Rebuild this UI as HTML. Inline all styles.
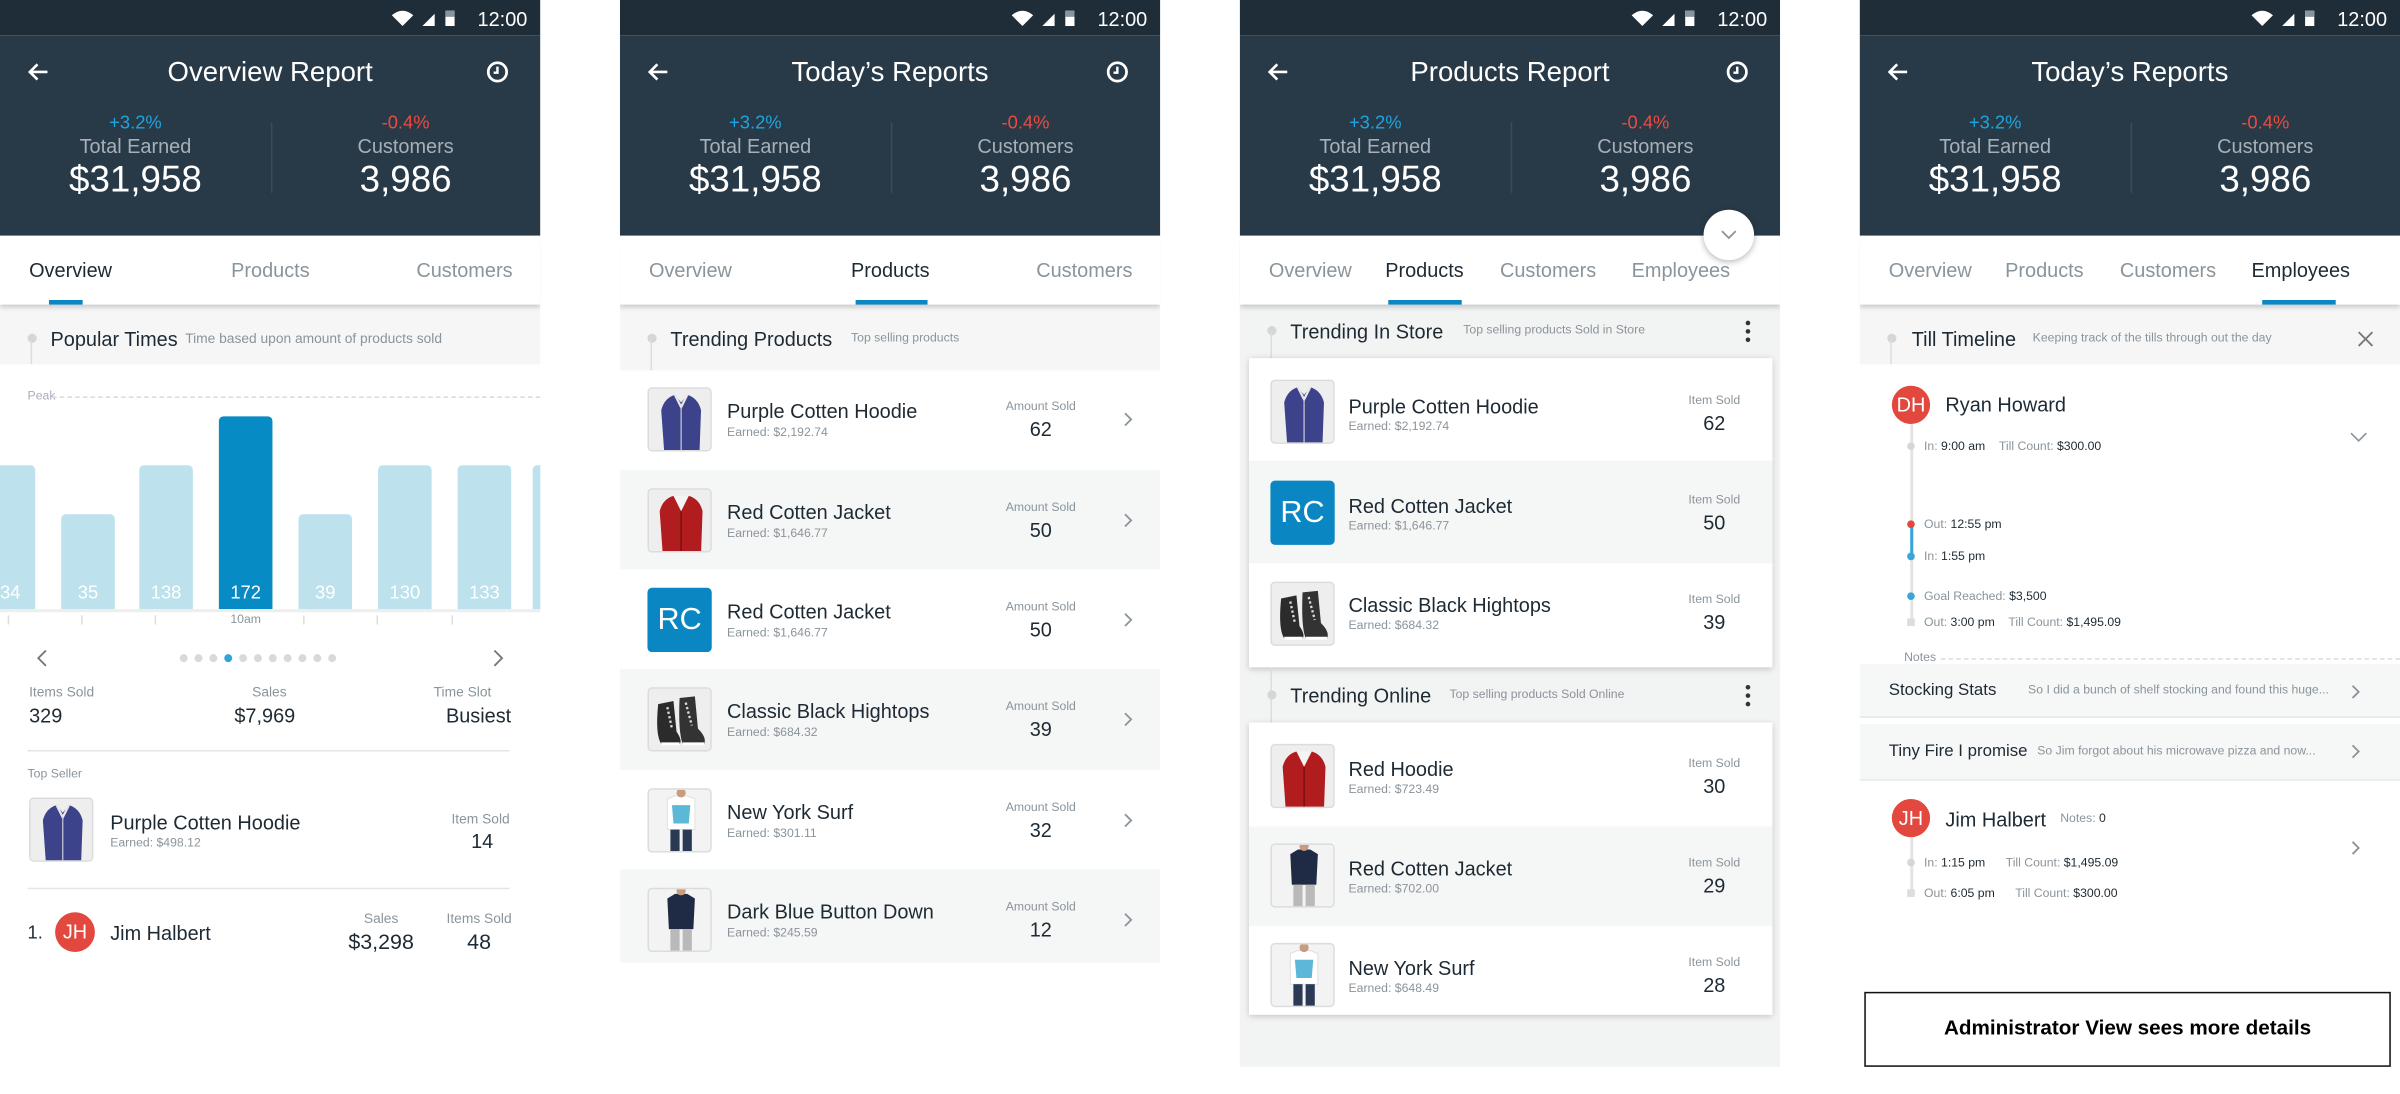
<!DOCTYPE html>
<html><head><meta charset="utf-8"><style>
*{margin:0;padding:0;box-sizing:border-box}
html,body{width:2400px;height:1094px;overflow:hidden;background:#fff}
body{font-family:"Liberation Sans",sans-serif;color:#1e2a33}
#w{position:absolute;left:0;top:0;width:1568px;height:715px;transform:scale(1.530612);transform-origin:0 0}
.s{position:absolute;top:0;width:353px;height:715px;overflow:hidden;background:#fff}
.a{position:absolute}
.t{position:absolute;white-space:nowrap;line-height:1}
.sb{position:absolute;left:0;top:0;width:353px;height:23px;background:#1f2d38}
.hd{position:absolute;left:0;top:23px;width:353px;height:131px;background:#283a48}
.tabs{position:absolute;left:0;top:154px;width:353px;height:45px;background:#fff;box-shadow:0 2px 3px rgba(0,0,0,.18);z-index:2}
.ul{position:absolute;top:42px;height:3px;background:#0a86c2}
.sec{position:absolute;left:0;width:353px;background:#f6f6f6}
.dot{position:absolute;width:6px;height:6px;border-radius:3px;background:#d6d6d6}
.g{color:#8a949b}
.th{position:absolute;width:42px;height:42px;border:1px solid #dcdcdc;border-radius:3px;background:#f1f1f1;overflow:hidden}
.rc{position:absolute;width:42px;height:42px;border-radius:3px;background:#0a87c3;color:#fff;font-size:20px;line-height:42px;text-align:center}
.av{position:absolute;border-radius:50%;background:#e2483d;color:#fff;text-align:center}
.card{position:absolute;left:6px;width:342px;background:#fff;box-shadow:0 1px 4px rgba(0,0,0,.2)}
</style></head><body><div id="w">

<svg width="0" height="0" style="position:absolute">
<defs>
<g id="hood"><rect width="42" height="42" fill="#eeeeee"/><path d="M10 42 L8 14 Q10 6 17 4 L21 9 L25 4 Q32 6 34 14 L33 42 Z" fill="#3c438a"/><path d="M17 4 L21 12 L25 4" fill="none" stroke="#e8e8e8" stroke-width="1.5"/><line x1="21" y1="12" x2="21" y2="42" stroke="#c9c9d8" stroke-width=".8"/></g>
<g id="jack"><rect width="42" height="42" fill="#eeeeee"/><path d="M9 42 L7 14 Q9 6 16 4 L21 10 L26 4 Q33 6 35 14 L34 42 Z" fill="#b11d1e"/><path d="M16 4 L21 14 L26 4 Z" fill="#f4f4f4"/><line x1="21" y1="14" x2="21" y2="42" stroke="#7a1010" stroke-width="1"/></g>
<g id="shoe"><rect width="42" height="42" fill="#eeeeee"/><path d="M6 10 L16 8 L18 28 Q22 34 20 36 L8 36 Q4 30 6 10Z" fill="#2b2b2b"/><path d="M20 6 L30 5 L32 26 Q38 32 36 36 L22 36 Q19 28 20 6Z" fill="#333"/><path d="M8 36 L20 36 M22 36 L36 36" stroke="#fff" stroke-width="2"/><path d="M12 12 L15 26 M24 9 L28 24" stroke="#ddd" stroke-width="1.5" stroke-dasharray="1.5 1.5"/></g>
<g id="tee"><rect width="42" height="42" fill="#f3f3f3"/><path d="M12 6 L17 4 L25 4 L30 6 L30 26 L12 26Z" fill="#fff" stroke="#ddd" stroke-width=".6"/><path d="M15 10 L27 10 L26 22 L16 22Z" fill="#5bb8d6"/><rect x="14" y="26" width="6" height="15" fill="#2a3a55"/><rect x="22" y="26" width="6" height="15" fill="#2a3a55"/><circle cx="21" cy="2" r="3" fill="#c99b7f"/></g>
<g id="navy"><rect width="42" height="42" fill="#f3f3f3"/><path d="M12 6 L17 3 L25 3 L30 6 L29 26 L13 26Z" fill="#1f2a44"/><rect x="14" y="26" width="6" height="15" fill="#b9b9b9"/><rect x="22" y="26" width="6" height="15" fill="#b9b9b9"/><circle cx="21" cy="1" r="3" fill="#c99b7f"/></g>
<g id="stat"><path d="M0 5 Q7 -1 14 5 L7 12 Z" fill="#fff"/><path d="M20 12 L28 4 L28 12Z" fill="#fff"/><rect x="35" y="2" width="6" height="10" fill="#fff"/><rect x="35" y="2" width="6" height="4" fill="#8893a0"/></g>
<g id="clk"><circle cx="7" cy="7" r="6" fill="none" stroke="#fff" stroke-width="1.8"/><path d="M7 3.5 V7.5 H4.5" fill="none" stroke="#fff" stroke-width="1.6"/></g>
<g id="back"><path d="M13 6 H1.5 M6.5 1 L1.5 6 L6.5 11" fill="none" stroke="#fff" stroke-width="1.7"/></g>
<g id="chev"><path d="M1 1 L5 5 L1 9" fill="none" stroke="#8a949b" stroke-width="1.2"/></g>
</defs></svg>

<!-- ================= SCREEN 1 ================= -->
<div class="s" style="left:0">
<div class="sb"></div>
<svg class="a" style="left:256px;top:5px" width="42" height="13"><use href="#stat"/></svg>
<div class="t" style="left:312px;top:6px;font-size:13px;color:#fff">12:00</div>
<div class="hd"></div>
<svg class="a" style="left:18px;top:41px" width="14" height="12"><use href="#back"/></svg>
<div class="t" style="left:0;width:353px;text-align:center;top:38px;font-size:18px;color:#fff">Overview Report</div>
<svg class="a" style="left:318px;top:40px" width="14" height="14"><use href="#clk"/></svg>
<div class="t" style="left:0;width:177px;text-align:center;top:74px;font-size:12px;color:#1ea4dd">+3.2%</div>
<div class="t" style="left:0;width:177px;text-align:center;top:89px;font-size:13px;color:#a7b0b8">Total Earned</div>
<div class="t" style="left:0;width:177px;text-align:center;top:106px;font-size:24px;color:#fff">$31,958</div>
<div class="a" style="left:177px;top:80px;width:1px;height:46px;background:#3a4c5a"></div>
<div class="t" style="left:177px;width:176px;text-align:center;top:74px;font-size:12px;color:#ee4a3f">-0.4%</div>
<div class="t" style="left:177px;width:176px;text-align:center;top:89px;font-size:13px;color:#a7b0b8">Customers</div>
<div class="t" style="left:177px;width:176px;text-align:center;top:106px;font-size:24px;color:#fff">3,986</div>
<div class="tabs">
 <div class="t" style="left:19px;top:16px;font-size:13px">Overview</div>
 <div class="t" style="left:151px;top:16px;font-size:13px;color:#8a949b">Products</div>
 <div class="t" style="left:272px;top:16px;font-size:13px;color:#8a949b">Customers</div>
 <div class="ul" style="left:32px;width:22px"></div>
</div>
<div class="sec" style="top:199px;height:39px"></div>
<div class="dot" style="left:18px;top:218px"></div><div class="a" style="left:20px;top:222px;width:1px;height:16px;background:#ddd"></div>
<div class="t" style="left:33px;top:215px;font-size:13px">Popular Times</div>
<div class="t g" style="left:121px;top:217px;font-size:9px">Time based upon amount of products sold</div>
<div class="t g" style="left:18px;top:255px;font-size:8px;color:#aab">Peak</div>
<div class="a" style="left:34px;top:259px;width:319px;border-top:1px dashed #dcdcdc"></div>
<div class="a" style="left:-10px;top:304px;width:33px;height:94px;background:#bde2ee;border-radius:3px 3px 0 0"></div>
<div class="a" style="left:40px;top:336px;width:35px;height:62px;background:#bde2ee;border-radius:3px 3px 0 0"></div>
<div class="a" style="left:91px;top:304px;width:35px;height:94px;background:#bde2ee;border-radius:3px 3px 0 0"></div>
<div class="a" style="left:143px;top:272px;width:35px;height:126px;background:#078bc4;border-radius:3px 3px 0 0"></div>
<div class="a" style="left:195px;top:336px;width:35px;height:62px;background:#bde2ee;border-radius:3px 3px 0 0"></div>
<div class="a" style="left:247px;top:304px;width:35px;height:94px;background:#bde2ee;border-radius:3px 3px 0 0"></div>
<div class="a" style="left:299px;top:304px;width:35px;height:94px;background:#bde2ee;border-radius:3px 3px 0 0"></div>
<div class="a" style="left:348px;top:304px;width:10px;height:94px;background:#bde2ee;border-radius:3px 3px 0 0"></div>
<div class="a" style="left:0;top:398px;width:353px;height:2px;background:#eee"></div>
<div class="t" style="left:0;top:381px;font-size:12px;color:#fff">34</div>
<div class="t" style="left:40px;width:35px;text-align:center;top:381px;font-size:12px;color:#fff">35</div>
<div class="t" style="left:91px;width:35px;text-align:center;top:381px;font-size:12px;color:#fff">138</div>
<div class="t" style="left:143px;width:35px;text-align:center;top:381px;font-size:12px;color:#fff">172</div>
<div class="t" style="left:195px;width:35px;text-align:center;top:381px;font-size:12px;color:#fff">39</div>
<div class="t" style="left:247px;width:35px;text-align:center;top:381px;font-size:12px;color:#fff">130</div>
<div class="t" style="left:299px;width:35px;text-align:center;top:381px;font-size:12px;color:#fff">133</div>
<div class="t g" style="left:143px;width:35px;text-align:center;top:401px;font-size:8px">10am</div>
<div class="a" style="left:5px;top:402px;width:1px;height:6px;background:#ddd"></div>
<div class="a" style="left:53px;top:402px;width:1px;height:6px;background:#ddd"></div>
<div class="a" style="left:101px;top:402px;width:1px;height:6px;background:#ddd"></div>
<div class="a" style="left:198px;top:402px;width:1px;height:6px;background:#ddd"></div>
<div class="a" style="left:246px;top:402px;width:1px;height:6px;background:#ddd"></div>
<div class="a" style="left:295px;top:402px;width:1px;height:6px;background:#ddd"></div>
<svg class="a" style="left:24px;top:424px" width="7" height="12"><path d="M6 1 L1 6 L6 11" fill="none" stroke="#777" stroke-width="1.2"/></svg>
<svg class="a" style="left:322px;top:424px" width="7" height="12"><path d="M1 1 L6 6 L1 11" fill="none" stroke="#777" stroke-width="1.2"/></svg>
<svg class="a" style="left:116px;top:426px" width="115" height="8">
<g fill="#d9d9d9"><circle cx="4" cy="4" r="2.6"/><circle cx="13.7" cy="4" r="2.6"/><circle cx="23.4" cy="4" r="2.6"/><circle cx="42.8" cy="4" r="2.6"/><circle cx="52.5" cy="4" r="2.6"/><circle cx="62.2" cy="4" r="2.6"/><circle cx="71.9" cy="4" r="2.6"/><circle cx="81.6" cy="4" r="2.6"/><circle cx="91.3" cy="4" r="2.6"/><circle cx="101" cy="4" r="2.6"/></g><circle cx="33.1" cy="4" r="2.6" fill="#2da5d8"/></svg>
<div class="t g" style="left:19px;top:448px;font-size:9px">Items Sold</div>
<div class="t" style="left:19px;top:461px;font-size:13px">329</div>
<div class="t g" style="left:126px;width:100px;text-align:center;top:448px;font-size:9px">Sales</div>
<div class="t" style="left:126px;width:94px;text-align:center;top:461px;font-size:13px">$7,969</div>
<div class="t g" style="left:233px;width:100px;text-align:right;top:448px;font-size:9px;padding-right:12px">Time Slot</div>
<div class="t" style="left:233px;width:101px;text-align:right;top:461px;font-size:13px">Busiest</div>
<div class="a" style="left:18px;top:490px;width:315px;height:1px;background:#e5e5e5"></div>
<div class="t g" style="left:18px;top:502px;font-size:8px">Top Seller</div>
<div class="th" style="left:19px;top:521px"><svg width="42" height="42"><use href="#hood"/></svg></div>
<div class="t" style="left:72px;top:531px;font-size:13px">Purple Cotten Hoodie</div>
<div class="t g" style="left:72px;top:547px;font-size:8px">Earned: $498.12</div>
<div class="t g" style="left:260px;width:73px;text-align:right;top:531px;font-size:9px">Item Sold</div>
<div class="t" style="left:290px;width:50px;text-align:center;top:543px;font-size:13px">14</div>
<div class="a" style="left:18px;top:580px;width:315px;height:1px;background:#e5e5e5"></div>
<div class="t" style="left:18px;top:603px;font-size:12px">1.</div>
<div class="av" style="left:36px;top:596px;width:26px;height:26px;line-height:26px;font-size:13px">JH</div>
<div class="t" style="left:72px;top:603px;font-size:13px">Jim Halbert</div>
<div class="t g" style="left:219px;width:60px;text-align:center;top:596px;font-size:9px">Sales</div>
<div class="t" style="left:219px;width:60px;text-align:center;top:608px;font-size:14px">$3,298</div>
<div class="t g" style="left:288px;width:50px;text-align:center;top:596px;font-size:9px">Items Sold</div>
<div class="t" style="left:288px;width:50px;text-align:center;top:608px;font-size:14px">48</div>
</div>

<!-- ================= SCREEN 2 ================= -->
<div class="s" style="left:405px;height:629px">
<div class="sb"></div>
<svg class="a" style="left:256px;top:5px" width="42" height="13"><use href="#stat"/></svg>
<div class="t" style="left:312px;top:6px;font-size:13px;color:#fff">12:00</div>
<div class="hd"></div>
<svg class="a" style="left:18px;top:41px" width="14" height="12"><use href="#back"/></svg>
<div class="t" style="left:0;width:353px;text-align:center;top:38px;font-size:18px;color:#fff">Today’s Reports</div>
<svg class="a" style="left:318px;top:40px" width="14" height="14"><use href="#clk"/></svg>
<div class="t" style="left:0;width:177px;text-align:center;top:74px;font-size:12px;color:#1ea4dd">+3.2%</div>
<div class="t" style="left:0;width:177px;text-align:center;top:89px;font-size:13px;color:#a7b0b8">Total Earned</div>
<div class="t" style="left:0;width:177px;text-align:center;top:106px;font-size:24px;color:#fff">$31,958</div>
<div class="a" style="left:177px;top:80px;width:1px;height:46px;background:#3a4c5a"></div>
<div class="t" style="left:177px;width:176px;text-align:center;top:74px;font-size:12px;color:#ee4a3f">-0.4%</div>
<div class="t" style="left:177px;width:176px;text-align:center;top:89px;font-size:13px;color:#a7b0b8">Customers</div>
<div class="t" style="left:177px;width:176px;text-align:center;top:106px;font-size:24px;color:#fff">3,986</div>
<div class="tabs">
 <div class="t" style="left:19px;top:16px;font-size:13px;color:#8a949b">Overview</div>
 <div class="t" style="left:151px;top:16px;font-size:13px">Products</div>
 <div class="t" style="left:272px;top:16px;font-size:13px;color:#8a949b">Customers</div>
 <div class="ul" style="left:154px;width:47px"></div>
</div>
<div class="sec" style="top:199px;height:43px"></div>
<div class="dot" style="left:18px;top:218px"></div><div class="a" style="left:20px;top:222px;width:1px;height:20px;background:#ddd"></div>
<div class="t" style="left:33px;top:215px;font-size:13px">Trending Products</div>
<div class="t g" style="left:151px;top:217px;font-size:8px">Top selling products</div>
<div class="a" style="left:0;top:307px;width:353px;height:65px;background:#f5f6f6"></div>
<div class="a" style="left:0;top:437px;width:353px;height:66px;background:#f5f6f6"></div>
<div class="a" style="left:0;top:568px;width:353px;height:61px;background:#f5f6f6"></div>

<div class="th" style="left:18px;top:253px"><svg width="42" height="42"><use href="#hood"/></svg></div>
<div class="t" style="left:70px;top:262px;font-size:13px">Purple Cotten Hoodie</div>
<div class="t g" style="left:70px;top:279px;font-size:8px">Earned: $2,192.74</div>
<div class="t g" style="left:245px;width:60px;text-align:center;top:262px;font-size:8px">Amount Sold</div>
<div class="t" style="left:245px;width:60px;text-align:center;top:274px;font-size:13px">62</div>
<svg class="a" style="left:329px;top:269px" width="7" height="11"><use href="#chev"/></svg>

<div class="th" style="left:18px;top:319px"><svg width="42" height="42"><use href="#jack"/></svg></div>
<div class="t" style="left:70px;top:328px;font-size:13px">Red Cotten Jacket</div>
<div class="t g" style="left:70px;top:345px;font-size:8px">Earned: $1,646.77</div>
<div class="t g" style="left:245px;width:60px;text-align:center;top:328px;font-size:8px">Amount Sold</div>
<div class="t" style="left:245px;width:60px;text-align:center;top:340px;font-size:13px">50</div>
<svg class="a" style="left:329px;top:335px" width="7" height="11"><use href="#chev"/></svg>

<div class="rc" style="left:18px;top:384px">RC</div>
<div class="t" style="left:70px;top:393px;font-size:13px">Red Cotten Jacket</div>
<div class="t g" style="left:70px;top:410px;font-size:8px">Earned: $1,646.77</div>
<div class="t g" style="left:245px;width:60px;text-align:center;top:393px;font-size:8px">Amount Sold</div>
<div class="t" style="left:245px;width:60px;text-align:center;top:405px;font-size:13px">50</div>
<svg class="a" style="left:329px;top:400px" width="7" height="11"><use href="#chev"/></svg>

<div class="th" style="left:18px;top:449px"><svg width="42" height="42"><use href="#shoe"/></svg></div>
<div class="t" style="left:70px;top:458px;font-size:13px">Classic Black Hightops</div>
<div class="t g" style="left:70px;top:475px;font-size:8px">Earned: $684.32</div>
<div class="t g" style="left:245px;width:60px;text-align:center;top:458px;font-size:8px">Amount Sold</div>
<div class="t" style="left:245px;width:60px;text-align:center;top:470px;font-size:13px">39</div>
<svg class="a" style="left:329px;top:465px" width="7" height="11"><use href="#chev"/></svg>

<div class="th" style="left:18px;top:515px"><svg width="42" height="42"><use href="#tee"/></svg></div>
<div class="t" style="left:70px;top:524px;font-size:13px">New York Surf</div>
<div class="t g" style="left:70px;top:541px;font-size:8px">Earned: $301.11</div>
<div class="t g" style="left:245px;width:60px;text-align:center;top:524px;font-size:8px">Amount Sold</div>
<div class="t" style="left:245px;width:60px;text-align:center;top:536px;font-size:13px">32</div>
<svg class="a" style="left:329px;top:531px" width="7" height="11"><use href="#chev"/></svg>

<div class="th" style="left:18px;top:580px"><svg width="42" height="42"><use href="#navy"/></svg></div>
<div class="t" style="left:70px;top:589px;font-size:13px">Dark Blue Button Down</div>
<div class="t g" style="left:70px;top:606px;font-size:8px">Earned: $245.59</div>
<div class="t g" style="left:245px;width:60px;text-align:center;top:589px;font-size:8px">Amount Sold</div>
<div class="t" style="left:245px;width:60px;text-align:center;top:601px;font-size:13px">12</div>
<svg class="a" style="left:329px;top:596px" width="7" height="11"><use href="#chev"/></svg>
</div>

<!-- ================= SCREEN 3 ================= -->
<div class="s" style="left:810px;height:697px;background:#f2f3f3">
<div class="sb"></div>
<svg class="a" style="left:256px;top:5px" width="42" height="13"><use href="#stat"/></svg>
<div class="t" style="left:312px;top:6px;font-size:13px;color:#fff">12:00</div>
<div class="hd"></div>
<svg class="a" style="left:18px;top:41px" width="14" height="12"><use href="#back"/></svg>
<div class="t" style="left:0;width:353px;text-align:center;top:38px;font-size:18px;color:#fff">Products Report</div>
<svg class="a" style="left:318px;top:40px" width="14" height="14"><use href="#clk"/></svg>
<div class="t" style="left:0;width:177px;text-align:center;top:74px;font-size:12px;color:#1ea4dd">+3.2%</div>
<div class="t" style="left:0;width:177px;text-align:center;top:89px;font-size:13px;color:#a7b0b8">Total Earned</div>
<div class="t" style="left:0;width:177px;text-align:center;top:106px;font-size:24px;color:#fff">$31,958</div>
<div class="a" style="left:177px;top:80px;width:1px;height:46px;background:#3a4c5a"></div>
<div class="t" style="left:177px;width:176px;text-align:center;top:74px;font-size:12px;color:#ee4a3f">-0.4%</div>
<div class="t" style="left:177px;width:176px;text-align:center;top:89px;font-size:13px;color:#a7b0b8">Customers</div>
<div class="t" style="left:177px;width:176px;text-align:center;top:106px;font-size:24px;color:#fff">3,986</div>
<div class="tabs">
 <div class="t" style="left:19px;top:16px;font-size:13px;color:#8a949b">Overview</div>
 <div class="t" style="left:95px;top:16px;font-size:13px">Products</div>
 <div class="t" style="left:170px;top:16px;font-size:13px;color:#8a949b">Customers</div>
 <div class="t" style="left:256px;top:16px;font-size:13px;color:#8a949b">Employees</div>
 <div class="ul" style="left:97px;width:48px"></div>
</div>
<div class="a" style="left:303px;top:137px;width:33px;height:33px;border-radius:50%;background:#fff;box-shadow:0 1px 4px rgba(0,0,0,.3);z-index:3"><svg class="a" style="left:11px;top:13px" width="11" height="7"><path d="M1 1 L5.5 5.5 L10 1" fill="none" stroke="#8a949b" stroke-width="1.2"/></svg></div>
<div class="dot" style="left:18px;top:213px"></div><div class="a" style="left:20px;top:217px;width:1px;height:17px;background:#ddd"></div>
<div class="t" style="left:33px;top:210px;font-size:13px">Trending In Store</div>
<div class="t g" style="left:146px;top:212px;font-size:8px">Top selling products Sold in Store</div>
<svg class="a" style="left:330px;top:209px" width="4" height="15"><g fill="#333"><circle cx="2" cy="2" r="1.5"/><circle cx="2" cy="7.5" r="1.5"/><circle cx="2" cy="13" r="1.5"/></g></svg>
<div class="card" style="top:234px;height:202px">
 <div class="a" style="left:0;top:67px;width:342px;height:67px;background:#f5f6f6"></div>
 <div class="th" style="left:14px;top:14px"><svg width="42" height="42"><use href="#hood"/></svg></div>
 <div class="t" style="left:65px;top:25px;font-size:13px">Purple Cotten Hoodie</div>
 <div class="t g" style="left:65px;top:41px;font-size:8px">Earned: $2,192.74</div>
 <div class="t g" style="left:280px;width:48px;text-align:center;top:24px;font-size:8px">Item Sold</div>
 <div class="t" style="left:280px;width:48px;text-align:center;top:36px;font-size:13px">62</div>
 <div class="rc" style="left:14px;top:80px">RC</div>
 <div class="t" style="left:65px;top:90px;font-size:13px">Red Cotten Jacket</div>
 <div class="t g" style="left:65px;top:106px;font-size:8px">Earned: $1,646.77</div>
 <div class="t g" style="left:280px;width:48px;text-align:center;top:89px;font-size:8px">Item Sold</div>
 <div class="t" style="left:280px;width:48px;text-align:center;top:101px;font-size:13px">50</div>
 <div class="th" style="left:14px;top:146px"><svg width="42" height="42"><use href="#shoe"/></svg></div>
 <div class="t" style="left:65px;top:155px;font-size:13px">Classic Black Hightops</div>
 <div class="t g" style="left:65px;top:171px;font-size:8px">Earned: $684.32</div>
 <div class="t g" style="left:280px;width:48px;text-align:center;top:154px;font-size:8px">Item Sold</div>
 <div class="t" style="left:280px;width:48px;text-align:center;top:166px;font-size:13px">39</div>
</div>
<div class="a" style="left:20px;top:436px;width:1px;height:36px;background:#ddd"></div>
<div class="dot" style="left:18px;top:451px"></div>
<div class="t" style="left:33px;top:448px;font-size:13px">Trending Online</div>
<div class="t g" style="left:137px;top:450px;font-size:8px">Top selling products Sold Online</div>
<svg class="a" style="left:330px;top:447px" width="4" height="15"><g fill="#333"><circle cx="2" cy="2" r="1.5"/><circle cx="2" cy="7.5" r="1.5"/><circle cx="2" cy="13" r="1.5"/></g></svg>
<div class="card" style="top:472px;height:191px">
 <div class="a" style="left:0;top:68px;width:342px;height:65px;background:#f5f6f6"></div>
 <div class="th" style="left:14px;top:14px"><svg width="42" height="42"><use href="#jack"/></svg></div>
 <div class="t" style="left:65px;top:24px;font-size:13px">Red Hoodie</div>
 <div class="t g" style="left:65px;top:40px;font-size:8px">Earned: $723.49</div>
 <div class="t g" style="left:280px;width:48px;text-align:center;top:23px;font-size:8px">Item Sold</div>
 <div class="t" style="left:280px;width:48px;text-align:center;top:35px;font-size:13px">30</div>
 <div class="th" style="left:14px;top:79px"><svg width="42" height="42"><use href="#navy"/></svg></div>
 <div class="t" style="left:65px;top:89px;font-size:13px">Red Cotten Jacket</div>
 <div class="t g" style="left:65px;top:105px;font-size:8px">Earned: $702.00</div>
 <div class="t g" style="left:280px;width:48px;text-align:center;top:88px;font-size:8px">Item Sold</div>
 <div class="t" style="left:280px;width:48px;text-align:center;top:100px;font-size:13px">29</div>
 <div class="th" style="left:14px;top:144px"><svg width="42" height="42"><use href="#tee"/></svg></div>
 <div class="t" style="left:65px;top:154px;font-size:13px">New York Surf</div>
 <div class="t g" style="left:65px;top:170px;font-size:8px">Earned: $648.49</div>
 <div class="t g" style="left:280px;width:48px;text-align:center;top:153px;font-size:8px">Item Sold</div>
 <div class="t" style="left:280px;width:48px;text-align:center;top:165px;font-size:13px">28</div>
</div>
</div>

<!-- ================= SCREEN 4 ================= -->
<div class="s" style="left:1215px">
<div class="sb"></div>
<svg class="a" style="left:256px;top:5px" width="42" height="13"><use href="#stat"/></svg>
<div class="t" style="left:312px;top:6px;font-size:13px;color:#fff">12:00</div>
<div class="hd"></div>
<svg class="a" style="left:18px;top:41px" width="14" height="12"><use href="#back"/></svg>
<div class="t" style="left:0;width:353px;text-align:center;top:38px;font-size:18px;color:#fff">Today’s Reports</div>
<div class="t" style="left:0;width:177px;text-align:center;top:74px;font-size:12px;color:#1ea4dd">+3.2%</div>
<div class="t" style="left:0;width:177px;text-align:center;top:89px;font-size:13px;color:#a7b0b8">Total Earned</div>
<div class="t" style="left:0;width:177px;text-align:center;top:106px;font-size:24px;color:#fff">$31,958</div>
<div class="a" style="left:177px;top:80px;width:1px;height:46px;background:#3a4c5a"></div>
<div class="t" style="left:177px;width:176px;text-align:center;top:74px;font-size:12px;color:#ee4a3f">-0.4%</div>
<div class="t" style="left:177px;width:176px;text-align:center;top:89px;font-size:13px;color:#a7b0b8">Customers</div>
<div class="t" style="left:177px;width:176px;text-align:center;top:106px;font-size:24px;color:#fff">3,986</div>
<div class="tabs">
 <div class="t" style="left:19px;top:16px;font-size:13px;color:#8a949b">Overview</div>
 <div class="t" style="left:95px;top:16px;font-size:13px;color:#8a949b">Products</div>
 <div class="t" style="left:170px;top:16px;font-size:13px;color:#8a949b">Customers</div>
 <div class="t" style="left:256px;top:16px;font-size:13px">Employees</div>
 <div class="ul" style="left:263px;width:48px"></div>
</div>
<div class="sec" style="top:199px;height:39px"></div>
<div class="dot" style="left:18px;top:218px"></div><div class="a" style="left:20px;top:222px;width:1px;height:16px;background:#ddd"></div>
<div class="t" style="left:34px;top:215px;font-size:13px">Till Timeline</div>
<div class="t g" style="left:113px;top:217px;font-size:8px">Keeping track of the tills through out the day</div>
<svg class="a" style="left:325px;top:216px" width="11" height="11"><path d="M1 1 L10 10 M10 1 L1 10" stroke="#777" stroke-width="1.2"/></svg>
<div class="av" style="left:21px;top:252px;width:25px;height:25px;line-height:25px;font-size:13px">DH</div>
<div class="t" style="left:56px;top:258px;font-size:13px">Ryan Howard</div>
<div class="a" style="left:33px;top:277px;width:1.5px;height:130px;background:#e4e4e4"></div>
<div class="a" style="left:33px;top:343px;width:1.5px;height:21px;background:#3aa5d8"></div>
<svg class="a" style="left:320px;top:282px" width="12" height="7"><path d="M1 1 L6 6 L11 1" fill="none" stroke="#8a949b" stroke-width="1.1"/></svg>
<div class="dot" style="left:31px;top:289px;width:5px;height:5px"></div>
<div class="t" style="left:42px;top:288px;font-size:8px"><span class="g">In:</span> 9:00 am &nbsp;&nbsp;&nbsp;<span class="g">Till Count:</span> $300.00</div>
<div class="dot" style="left:31px;top:340px;width:5px;height:5px;background:#e2483d"></div>
<div class="t" style="left:42px;top:339px;font-size:8px"><span class="g">Out:</span> 12:55 pm</div>
<div class="dot" style="left:31px;top:361px;width:5px;height:5px;background:#3aa5d8"></div>
<div class="t" style="left:42px;top:360px;font-size:8px"><span class="g">In:</span> 1:55 pm</div>
<div class="dot" style="left:31px;top:387px;width:5px;height:5px;background:#3aa5d8"></div>
<div class="t" style="left:42px;top:386px;font-size:8px"><span class="g">Goal Reached:</span> $3,500</div>
<div class="a" style="left:31px;top:404px;width:5px;height:5px;background:#ddd"></div>
<div class="t" style="left:42px;top:403px;font-size:8px"><span class="g">Out:</span> 3:00 pm &nbsp;&nbsp;&nbsp;<span class="g">Till Count:</span> $1,495.09</div>
<div class="t g" style="left:29px;top:426px;font-size:8px">Notes</div>
<div class="a" style="left:53px;top:430px;width:300px;border-top:1px dashed #ddd"></div>
<div class="a" style="left:0;top:434px;width:353px;height:35px;background:#f6f7f7;border-bottom:1px solid #e8e8e8"></div>
<div class="t" style="left:19px;top:446px;font-size:11px">Stocking Stats</div>
<div class="t g" style="left:110px;top:447px;font-size:8px">So I did a bunch of shelf stocking and found this huge...</div>
<svg class="a" style="left:321px;top:447px" width="7" height="11"><use href="#chev"/></svg>
<div class="a" style="left:0;top:473px;width:353px;height:37px;background:#f6f7f7;border-bottom:1px solid #e8e8e8"></div>
<div class="t" style="left:19px;top:486px;font-size:11px">Tiny Fire I promise</div>
<div class="t g" style="left:116px;top:487px;font-size:8px">So Jim forgot about his microwave pizza and now...</div>
<svg class="a" style="left:321px;top:486px" width="7" height="11"><use href="#chev"/></svg>
<div class="av" style="left:21px;top:522px;width:25px;height:25px;line-height:25px;font-size:13px">JH</div>
<div class="t" style="left:56px;top:529px;font-size:13px">Jim Halbert</div>
<div class="t" style="left:131px;top:531px;font-size:8px"><span class="g">Notes:</span> 0</div>
<div class="a" style="left:33px;top:547px;width:1.5px;height:37px;background:#e4e4e4"></div>
<svg class="a" style="left:321px;top:549px" width="7" height="11"><use href="#chev"/></svg>
<div class="dot" style="left:31px;top:561px;width:5px;height:5px"></div>
<div class="t" style="left:42px;top:560px;font-size:8px"><span class="g">In:</span> 1:15 pm &nbsp;&nbsp;&nbsp;&nbsp;&nbsp;<span class="g">Till Count:</span> $1,495.09</div>
<div class="a" style="left:31px;top:581px;width:5px;height:5px;background:#ddd"></div>
<div class="t" style="left:42px;top:580px;font-size:8px"><span class="g">Out:</span> 6:05 pm &nbsp;&nbsp;&nbsp;&nbsp;&nbsp;<span class="g">Till Count:</span> $300.00</div>
<div class="a" style="left:3px;top:648px;width:344px;height:49px;border:1px solid #111;background:#fff"></div>
<div class="t" style="left:3px;width:344px;text-align:center;top:665px;font-size:13.5px;font-weight:bold;color:#000">Administrator View sees more details</div>
</div>
</div></body></html>
